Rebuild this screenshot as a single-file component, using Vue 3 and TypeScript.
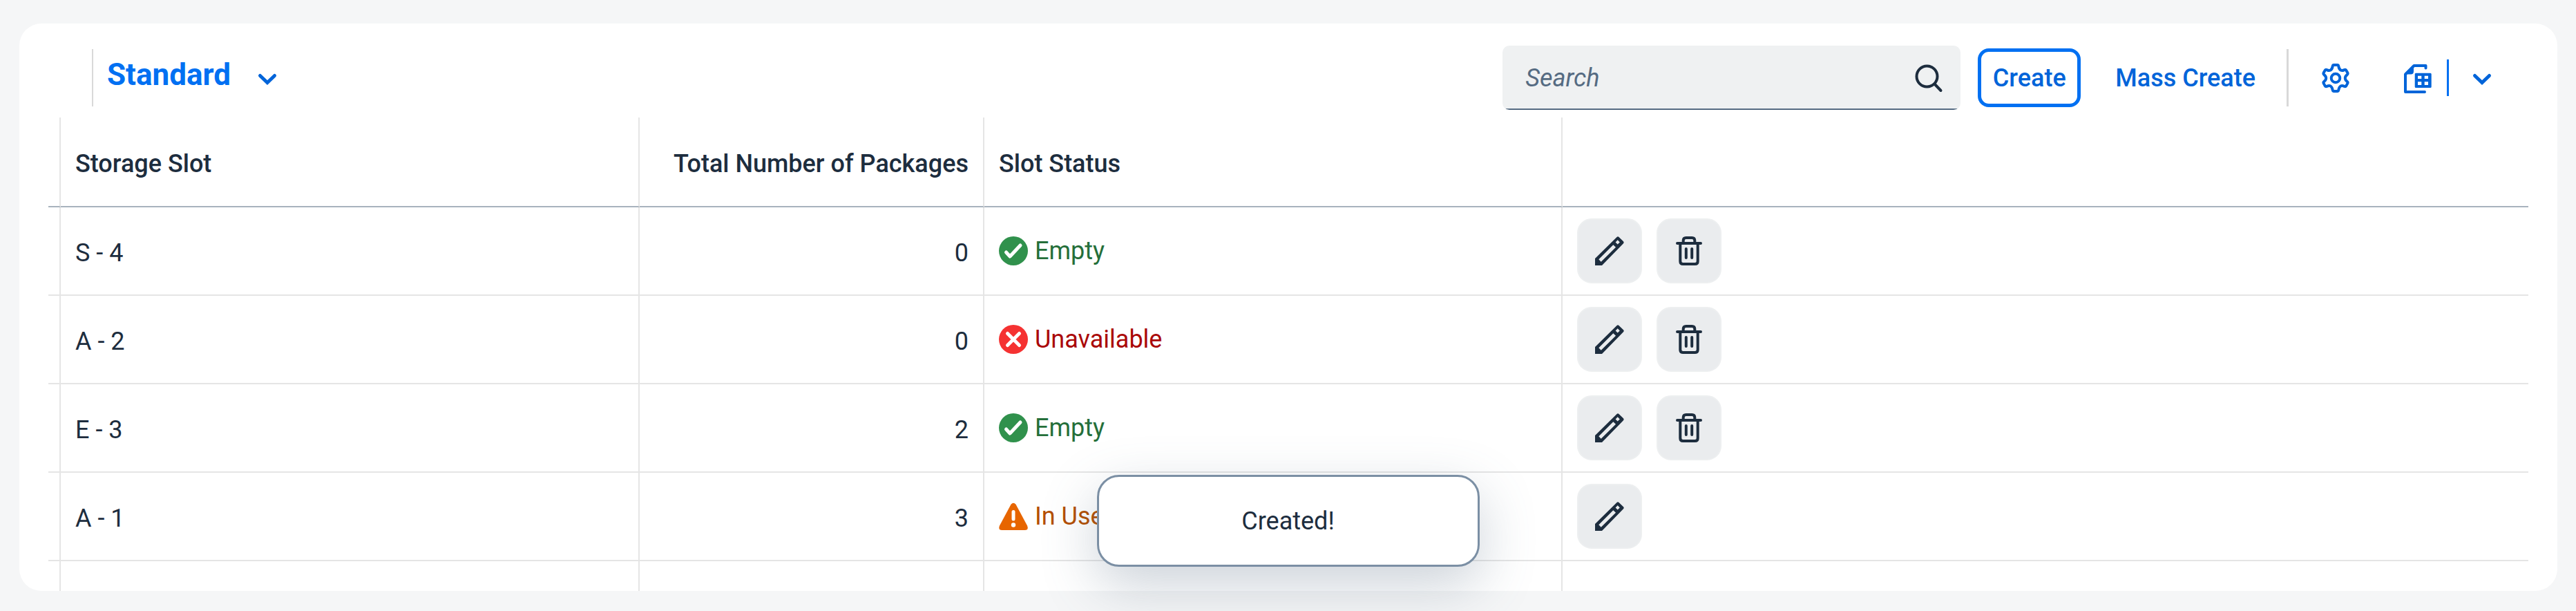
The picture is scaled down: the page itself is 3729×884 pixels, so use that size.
<script setup lang="ts">
import { ref } from 'vue'

type Status = 'success' | 'error' | 'warning'

interface Slot {
  name: string
  packages: number
  status: Status
  label: string
  deletable: boolean
}

const query = ref('')

const slots: Slot[] = [
  { name: 'S - 4', packages: 0, status: 'success', label: 'Empty', deletable: true },
  { name: 'A - 2', packages: 0, status: 'error', label: 'Unavailable', deletable: true },
  { name: 'E - 3', packages: 2, status: 'success', label: 'Empty', deletable: true },
  { name: 'A - 1', packages: 3, status: 'warning', label: 'In Use', deletable: false },
]
</script>

<template>
  <main class="page">
    <section class="card">
      <header class="toolbar">
        <span class="separator"></span>
        <button type="button" class="variant">
          <span class="variant-name">Standard</span>
          <svg class="icon" viewBox="0 0 42 42" aria-hidden="true">
            <path class="chevron" d="M10.5 17.5L21 27.5L31.5 17.5" />
          </svg>
        </button>
        <div class="actions">
          <div class="search">
            <input v-model="query" type="text" placeholder="Search" aria-label="Search" />
            <button type="button" class="search-go" aria-label="Start search">
              <svg class="icon" viewBox="0 0 42 42" aria-hidden="true">
                <circle class="line" cx="18.5" cy="18.5" r="15" />
                <path class="line" d="M29.5 29.5L38.5 39" />
              </svg>
            </button>
          </div>
          <button type="button" class="create">Create</button>
          <button type="button" class="mass">Mass Create</button>
        </div>
        <span class="separator bold"></span>
        <button type="button" class="settings" aria-label="Settings">
          <svg class="icon" viewBox="0 0 42 42" aria-hidden="true">
            <g id="gear-half">
              <path
                class="line"
                d="M21 2H23.5q1.5 0 1.8 1.8c.5 3 1.5 5 3.5 6c1.5 .7 3 .2 4.8 -.7q1.8 -.8 2.8 .8l1.8 3.2q1 1.8 -.6 3c-2 1.6 -2.8 3 -2.8 4.9c0 1.9 .8 3.3 2.8 4.9q1.6 1.2 .6 3l-1.8 3.2q-1 1.6 -2.8 .8c-1.8 -.9 -3.3 -1.4 -4.8 -.7c-2 1 -3 3 -3.5 6q-.3 1.8 -1.8 1.8H21"
              />
            </g>
            <use href="#gear-half" transform="translate(42 0) scale(-1 1)" />
            <circle class="line" cx="21" cy="21" r="6.3" />
          </svg>
        </button>
        <div class="split">
          <button type="button" class="export" aria-label="Export to spreadsheet">
            <svg class="icon" viewBox="0 0 42 42" aria-hidden="true">
              <path class="line" d="M32.5 6.5V3H15.5L3 15.5V41H31" />
              <path class="solid" d="M15 2V11q0 4.500-4 4.500H2z" />
              <path
                class="solid"
                fill-rule="evenodd"
                d="M18.200 13.700H39.200q1.500 0 1.500 1.500V33.500q0 1.500-1.500 1.500H18.200q-1.500 0-1.500-1.500V15.200q0-1.500 1.500-1.500zM21 17.700v4.300h5.300v-4.300zM30.700 17.700v4.300H36v-4.300zM21 26.300V31h5.300v-4.700zM30.700 26.300V31H36v-4.700z"
              />
            </svg>
          </button>
          <span class="split-line"></span>
          <button type="button" class="export-menu" aria-label="Export options">
            <svg class="icon" viewBox="0 0 42 42" aria-hidden="true">
              <path class="chevron" d="M10.5 17.5L21 27.5L31.5 17.5" />
            </svg>
          </button>
        </div>
      </header>

      <div class="table-area">
        <table>
          <colgroup>
            <col class="c-mark" />
            <col class="c-slot" />
            <col class="c-count" />
            <col class="c-status" />
            <col />
          </colgroup>
          <thead>
            <tr>
              <th></th>
              <th scope="col">Storage Slot</th>
              <th scope="col" class="num">Total Number of Packages</th>
              <th scope="col">Slot Status</th>
              <th></th>
            </tr>
          </thead>
          <tbody>
            <tr v-for="slot in slots" :key="slot.name">
              <td></td>
              <td class="text">{{ slot.name }}</td>
              <td class="text num">{{ slot.packages }}</td>
              <td>
                <span class="status" :class="slot.status">
                  <svg class="icon" viewBox="0 0 42 42" aria-hidden="true">
                    <template v-if="slot.status === 'success'">
                      <circle class="badge" cx="21" cy="21" r="21" />
                      <path class="mark" d="M10.5 23L16 29L31 13" />
                    </template>
                    <template v-else-if="slot.status === 'error'">
                      <circle class="badge" cx="21" cy="21" r="21" />
                      <path class="mark" d="M12.500 12.500L29.500 29.500M29.500 12.500L12.500 29.500" />
                    </template>
                    <template v-else>
                      <path
                        class="badge"
                        d="M17.500 3.800Q21 -.2 24.500 3.800L41 34.500Q43.500 40.800 37.500 41H4.500Q-1.500 40.800 1 34.500z"
                      />
                      <path class="mark" d="M21 14.500V25" />
                      <circle class="dot" cx="21" cy="33.500" r="3.200" />
                    </template>
                  </svg>
                  {{ slot.label }}
                </span>
              </td>
              <td>
                <div class="row-actions">
                  <button type="button" :aria-label="`Edit ${slot.name}`">
                    <svg class="icon" viewBox="0 0 42 42" aria-hidden="true">
                      <path
                        class="solid"
                        fill-rule="evenodd"
                        d="M0 42V32L31.500 1q1.500-1.500 3 0L41 7.300q1.400 1.500 0 3L10 42zM5.300 33.300L8.700 36.700L30 15.700L26.300 12.300zM32.700 5.300L29.600 8.400L32.700 11.500L35.800 8.400z"
                      />
                    </svg>
                  </button>
                  <button v-if="slot.deletable" type="button" :aria-label="`Delete ${slot.name}`">
                    <svg class="icon" viewBox="0 0 42 42" aria-hidden="true">
                      <path
                        class="line"
                        d="M4 10H38M8.300 10V36q0 4 4 4H29.700q4 0 4-4V10M12.700 10V6q0-4 4-4H25.300q4 0 4 4V10M16.800 18V31M25.200 18V31"
                      />
                    </svg>
                  </button>
                </div>
              </td>
            </tr>
            <tr>
              <td v-for="n in 5" :key="n"></td>
            </tr>
          </tbody>
        </table>
      </div>
    </section>

    <div class="toast" role="status">Created!</div>
  </main>
</template>

<style>
body {
  margin: 0;
  background: #f5f6f7;
}
</style>

<style scoped>
.page {
  position: relative;
  box-sizing: border-box;
  display: flex;
  flex-direction: column;
  height: 100vh;
  padding: 34px 27px 29px 28px;
  overflow: hidden;
  background: #f5f6f7;
  color: #1d2d3e;
  font-family: Roboto, 'Liberation Sans', sans-serif;
  font-size: 36px;
  line-height: 42px;
}

button {
  display: flex;
  align-items: center;
  justify-content: center;
  padding: 0;
  border: 0;
  background: none;
  color: #0064d9;
  font: inherit;
  font-weight: 500;
  white-space: nowrap;
  cursor: pointer;
}

.card {
  flex: 1;
  display: flex;
  flex-direction: column;
  min-height: 0;
  overflow: hidden;
  border-radius: 32px;
  background: #fff;
}

.toolbar {
  display: flex;
  align-items: center;
  gap: 20px;
  padding: 32px 62px 11px 105px;
}

.separator {
  width: 2px;
  height: 83px;
  background: #d9d9d9;
}

.separator.bold {
  width: 3px;
}

.variant {
  gap: 32px;
}

.variant-name {
  padding-bottom: 10px;
  color: #0070f2;
  font-size: 44px;
  font-weight: 700;
  line-height: 50px;
}

.actions {
  display: flex;
  align-items: center;
  gap: 25px;
  margin-left: auto;
}

.search {
  box-sizing: border-box;
  display: flex;
  align-items: center;
  width: 663px;
  height: 93px;
  padding: 0 25px 0 33px;
  overflow: hidden;
  border-radius: 10px;
  background: linear-gradient(#556b82, #556b82) 4px 91px / 655px 2px no-repeat, #eff1f2;
}

.search input {
  flex: 1;
  min-width: 0;
  padding: 0;
  border: 0;
  outline: 0;
  background: none;
  color: #1d2d3e;
  font: inherit;
}

.search input::placeholder {
  color: #556b82;
  font-style: italic;
  opacity: 1;
}

.search-go {
  color: #1d2d3e;
}

.create {
  box-sizing: border-box;
  min-width: 149px;
  height: 85px;
  border: 5px solid #0070f2;
  border-radius: 16px;
}

.mass {
  height: 85px;
  padding: 0 25px;
}

.settings {
  height: 85px;
  padding: 0 27px;
}

.split {
  display: flex;
  align-items: center;
}

.export {
  height: 85px;
  padding: 0 21px 0 30px;
}

.split-line {
  width: 3px;
  height: 53px;
  background: #0070f2;
}

.export-menu {
  width: 95px;
  height: 85px;
}

.icon {
  flex: none;
  display: block;
  width: 42px;
  height: 42px;
  overflow: visible;
}

.line {
  fill: none;
  stroke: currentColor;
  stroke-width: 4;
  stroke-linecap: round;
  stroke-linejoin: round;
}

.solid {
  fill: currentColor;
}

.chevron {
  fill: none;
  stroke: currentColor;
  stroke-width: 5;
  stroke-linecap: round;
}

.table-area {
  flex: 1;
  min-height: 0;
  margin: 0 42px;
  overflow: hidden;
}

table {
  width: 100%;
  border-spacing: 0;
  table-layout: fixed;
}

.c-mark {
  width: 18px;
}

.c-slot {
  width: 838px;
}

.c-count {
  width: 499px;
}

.c-status {
  width: 837px;
}

th,
td {
  box-sizing: border-box;
  height: 128px;
  padding: 0 21px;
  border-right: 2px solid #e5e5e5;
  border-bottom: 2px solid #e5e5e5;
  text-align: left;
  white-space: nowrap;
}

th {
  height: 130px;
  padding-top: 6px;
  border-bottom-color: #a8b3bd;
  font-weight: 500;
}

th:first-child,
td:first-child {
  padding: 0;
}

th:last-child,
td:last-child {
  border-right: 0;
}

.text {
  padding-top: 6px;
}

.num {
  text-align: right;
}

.status {
  display: flex;
  align-items: center;
  gap: 10px;
}

.success {
  color: #256f3a;
}

.error {
  color: #aa0808;
}

.warning {
  color: #b44f00;
}

.success .badge {
  fill: #30914c;
}

.error .badge {
  fill: #f53232;
}

.warning .badge {
  fill: #e76500;
}

.mark {
  fill: none;
  stroke: #fff;
  stroke-width: 5;
  stroke-linecap: round;
  stroke-linejoin: round;
}

.dot {
  fill: #fff;
}

.row-actions {
  display: flex;
  gap: 21px;
}

.row-actions button {
  box-sizing: border-box;
  width: 94px;
  height: 94px;
  border: 2px solid #edeff0;
  border-radius: 21px;
  background: #eaecee;
  color: #1d2d3e;
}

.toast {
  position: absolute;
  bottom: 64px;
  left: 50%;
  box-sizing: border-box;
  width: 554px;
  padding: 43px 40px 42px;
  border: 3px solid #7b8fa4;
  border-radius: 32px;
  background: #fff;
  box-shadow: 0 27px 80px rgba(85, 107, 130, 0.3);
  text-align: center;
  transform: translateX(-50%);
}
</style>
